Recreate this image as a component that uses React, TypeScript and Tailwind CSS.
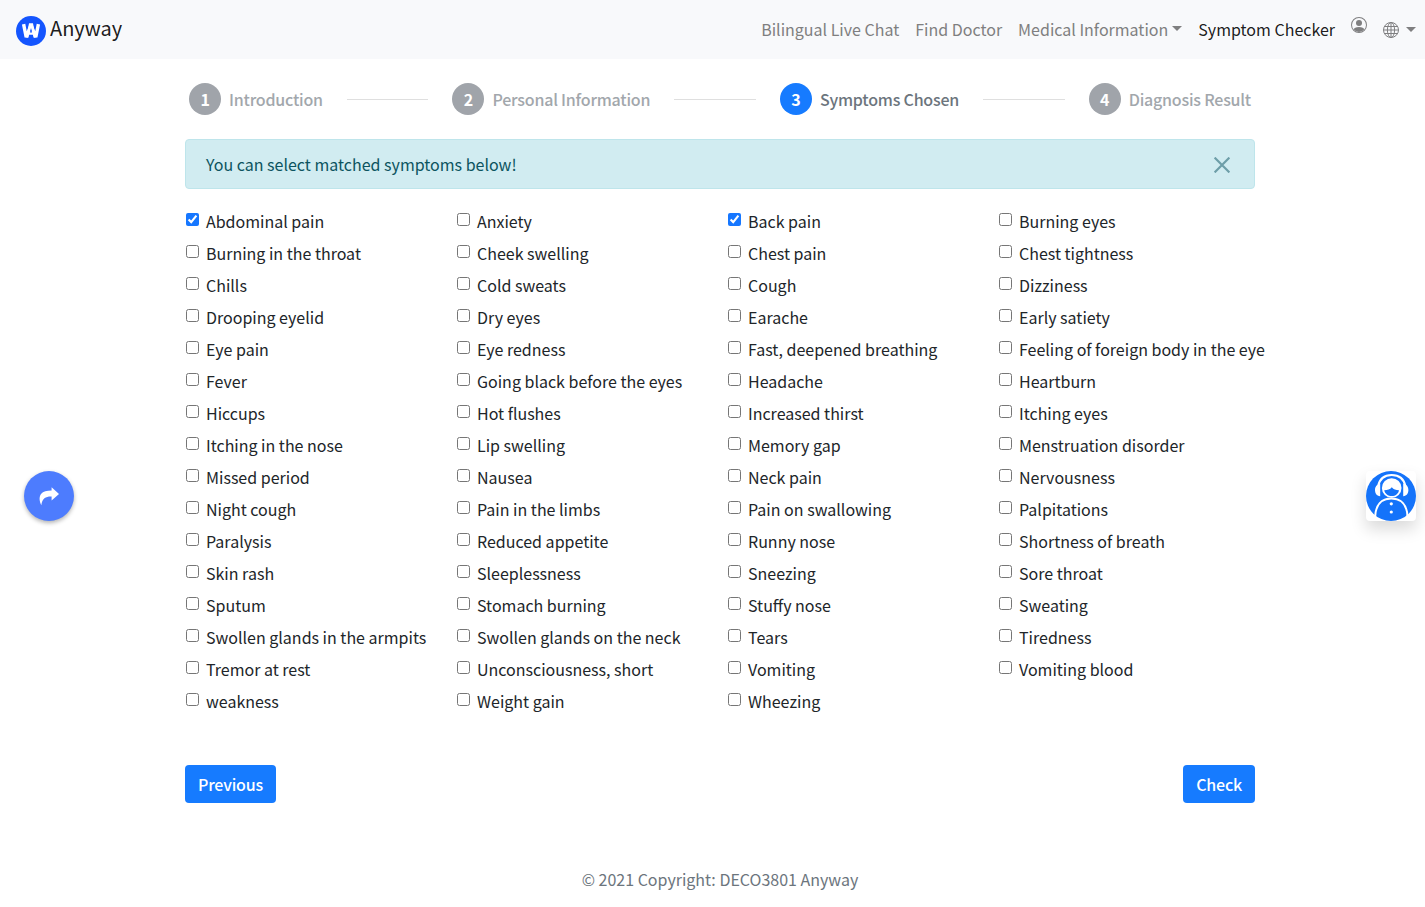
import React from "react";

const symptoms = [
  "Abdominal pain", "Anxiety", "Back pain", "Burning eyes",
  "Burning in the throat", "Cheek swelling", "Chest pain", "Chest tightness",
  "Chills", "Cold sweats", "Cough", "Dizziness",
  "Drooping eyelid", "Dry eyes", "Earache", "Early satiety",
  "Eye pain", "Eye redness", "Fast, deepened breathing", "Feeling of foreign body in the eye",
  "Fever", "Going black before the eyes", "Headache", "Heartburn",
  "Hiccups", "Hot flushes", "Increased thirst", "Itching eyes",
  "Itching in the nose", "Lip swelling", "Memory gap", "Menstruation disorder",
  "Missed period", "Nausea", "Neck pain", "Nervousness",
  "Night cough", "Pain in the limbs", "Pain on swallowing", "Palpitations",
  "Paralysis", "Reduced appetite", "Runny nose", "Shortness of breath",
  "Skin rash", "Sleeplessness", "Sneezing", "Sore throat",
  "Sputum", "Stomach burning", "Stuffy nose", "Sweating",
  "Swollen glands in the armpits", "Swollen glands on the neck", "Tears", "Tiredness",
  "Tremor at rest", "Unconsciousness, short", "Vomiting", "Vomiting blood",
  "weakness", "Weight gain", "Wheezing",
];

const chosen = ["Abdominal pain", "Back pain"];
const steps = ["Introduction", "Personal Information", "Symptoms Chosen", "Diagnosis Result"];
const activeStep = 2;

function Caret() {
  return <span className="inline-block border-x-[5px] border-t-[5px] border-x-transparent border-t-[#7f7f80]" />;
}

function Logo() {
  return (
    <svg width="30" height="30" viewBox="0 0 30 30" fill="none">
      <circle cx="15" cy="15" r="15" fill="#1455fe" />
      <path d="M7.600 8.200 10.200 21.200 15 9.500 19.800 21.200 22.400 8.200" stroke="#fff" strokeWidth="3.400" strokeLinejoin="bevel" />
      <path d="M11.200 21.500 14 8.400h2L18.800 21.500M12.500 17.600h5" stroke="#fff" strokeWidth="2.400" />
      <path d="M15 12 14 15.600h2zM14.200 19.200h1.600l-.3 3.300h-1z" fill="#1455fe" />
    </svg>
  );
}

function PersonIcon() {
  return (
    <svg width="16" height="16" viewBox="0 0 16 16" fill="#7f7f80">
      <path d="M13.468 12.37C12.758 11.226 11.195 10 8 10s-4.757 1.225-5.468 2.37A6.987 6.987 0 0 0 8 15a6.987 6.987 0 0 0 5.468-2.63z" />
      <path fillRule="evenodd" d="M8 9a3 3 0 1 0 0-6 3 3 0 0 0 0 6z" />
      <path fillRule="evenodd" d="M8 1a7 7 0 1 0 0 14A7 7 0 0 0 8 1zM0 8a8 8 0 1 1 16 0A8 8 0 0 1 0 8z" />
    </svg>
  );
}

function GlobeIcon() {
  return (
    <svg width="16" height="16" viewBox="0 0 16 16" fill="none" stroke="#7f7f80">
      <circle cx="8" cy="8" r="7.5" />
      <ellipse cx="8" cy="8" rx="3.6" ry="7.5" />
      <path d="M8 .5v15M.5 8h15M1.700 4.500h12.600M1.700 11.500h12.600" />
    </svg>
  );
}

function AgentIcon() {
  return (
    <svg width="50" height="50" viewBox="0 0 50 50" fill="none">
      <circle cx="25" cy="25" r="25" fill="#1473fa" />
      <path d="M12 15.500C13.500 8 18.500 4 25.700 4S38 8 39.500 15.500" stroke="#fff" strokeWidth="2.200" />
      <path d="M14.200 13C10.500 13.500 9 16 9 19s1.600 6 5.200 6.200zM37.200 13c3.700.5 5.200 3 5.200 6s-1.600 6-5.200 6.200z" fill="#fff" />
      <circle cx="25.700" cy="17" r="9.800" fill="#fff" />
      <path d="M18.200 19.200c3.400-.1 5.700-.8 7.600-3 1.900 2.200 3.900 2.900 7.200 3-.6 3.500-3.500 5.800-7.200 5.800s-6.800-2.300-7.600-5.800z" fill="#1473fa" />
      <path d="M9.200 45.500C9.600 34 15.500 27.600 25.300 27.600S41.100 34 41.500 45.500" stroke="#fff" strokeWidth="2" />
      <circle cx="25.300" cy="32.800" r="1.600" fill="#fff" />
      <circle cx="25.300" cy="41" r="1.600" fill="#fff" />
    </svg>
  );
}

export default function App() {
  return (
    <div className="relative h-[907px] w-[1425px] overflow-hidden bg-white font-['Noto_Sans_CJK_SC',sans-serif] text-base leading-6 text-[#212529]">
      <nav className="flex h-[59px] items-center justify-between bg-[#f8f9fb] pl-4 pr-[9px]">
        <a className="flex items-center gap-1 pt-[3px] text-black/90">
          <Logo />
          <span className="-mt-[7px] text-xl leading-[30px]">Anyway</span>
        </a>
        <div className="flex items-center gap-4 text-[#7f7f80]">
          <a className="-mt-0.5">Bilingual Live Chat</a>
          <a className="-mt-0.5">Find Doctor</a>
          <a className="-mt-0.5 flex items-center gap-1">Medical Information<Caret /></a>
          <a className="-mt-0.5 text-black/90">Symptom Checker</a>
          <a className="-mt-[9px]"><PersonIcon /></a>
          <a className="flex items-center gap-[7px]"><GlobeIcon /><Caret /></a>
        </div>
      </nav>

      <main className="ml-[185px] w-[1070px]">
        <ol className="flex h-20 items-center px-1">
          {steps.map((step, i) => (
            <React.Fragment key={step}>
              {i > 0 && <li className="mx-6 h-px flex-1 bg-[#dfdfdf]" />}
              <li className={`flex items-center gap-2 font-medium tracking-[-0.21px] ${i === activeStep ? "text-[#6c757d]" : "text-[#a2a7ac]"}`}>
                <span className={`flex size-8 items-center justify-center rounded-full font-bold text-white ${i === activeStep ? "bg-[#167bff]" : "bg-[#a0a4aa]"}`}>
                  {i + 1}
                </span>
                {step}
              </li>
            </React.Fragment>
          ))}
        </ol>

        <div className="flex h-[50px] items-center justify-between rounded border border-[#bee5eb] bg-[#d1ecf1] pl-5 pr-6 text-[#0c5460]">
          <span>You can select matched symptoms below!</span>
          <svg className="mt-0.5" width="16" height="16" viewBox="0 0 16 16" stroke="#6d9ea8" strokeWidth="2.200">
            <path d="M.6.6 15.400 15.400M15.400.6.6 15.400" />
          </svg>
        </div>

        <div className="mt-4 grid w-[1084px] grid-cols-4">
          {symptoms.map((name) => (
            <label key={name} className="flex h-8 items-center whitespace-nowrap">
              <input type="checkbox" defaultChecked={chosen.includes(name)} className="mb-[3px] ml-px mr-[7px] size-[13px] accent-[#1677ff]" />
              {name}
            </label>
          ))}
        </div>

        <div className="mt-12 flex justify-between font-medium tracking-[-0.2px] text-white">
          <button className="h-[38px] rounded bg-[#167bff] px-[13px]">Previous</button>
          <button className="h-[38px] rounded bg-[#167bff] px-[13px]">Check</button>
        </div>
        <footer className="mt-16 text-center text-[#6c757d]">© 2021 Copyright: DECO3801 Anyway</footer>
      </main>

      <button className="absolute left-6 top-[471px] flex size-[50px] items-center justify-center rounded-full bg-[#4d7cfe] shadow-[0_2px_4px_rgba(0,0,0,0.3)]">
        <svg width="22" height="20" viewBox="0 0 22 20" fill="#fff">
          <path d="M13.600 1.200 21 8l-7.400 6.500v-3.900C8 10.400 4.200 12.400 3.300 19.200 1.400 15.500.8 11 3 8c2.200-2.900 5.800-3.500 10.600-3.500z" />
        </svg>
      </button>
      <button className="absolute left-[1366px] top-[471px] size-[50px] overflow-hidden rounded bg-white shadow-[0_8px_16px_rgba(0,0,0,0.15)]">
        <AgentIcon />
      </button>
    </div>
  );
}
